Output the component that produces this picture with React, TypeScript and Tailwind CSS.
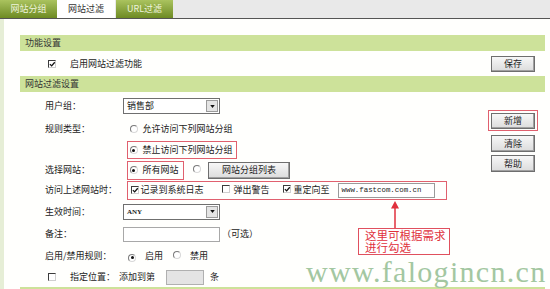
import React from "react";

const Check = ({ checked }: { checked?: boolean }) => (
  <span className="relative inline-block w-[8px] h-[8px] shrink-0 bg-white border-t border-l border-b border-r border-t-[#3c3c3c] border-l-[#3c3c3c] border-b-[#cfcfcf] border-r-[#cfcfcf]">
    {checked && (
      <svg viewBox="0 0 8 8" className="absolute left-0 top-0 w-[7px] h-[7px]">
        <path d="M1 3.6 L3 5.6 L6.6 1.4" stroke="#111" strokeWidth="1.5" fill="none" />
      </svg>
    )}
  </span>
);

const Radio = ({ checked }: { checked?: boolean }) => (
  <span className="inline-flex items-center justify-center w-[8px] h-[8px] shrink-0 rounded-full bg-white border border-t-[#7a7a7a] border-l-[#7a7a7a] border-b-[#d8d8d8] border-r-[#d8d8d8]">
    {checked && <span className="w-[3px] h-[3px] rounded-full bg-[#111]" />}
  </span>
);

const Btn = ({ children, className }: { children: React.ReactNode; className: string }) => (
  <div
    className={
      "flex items-center justify-center border border-[#6e6e6e] bg-gradient-to-b from-[#f7f7f7] to-[#dcdcdc] text-[#1e1e1e] shadow-[inset_-1px_-1px_0_#a0a0a0] " +
      className
    }
  >
    {children}
  </div>
);

const Select = ({ value, mono }: { value: string; mono?: boolean }) => (
  <div className="flex items-center w-[97px] h-[16px] border border-[#6f6f6f] bg-white">
    <span
      className={
        mono
          ? "flex-1 pl-[3px] font-['Liberation_Serif',serif] font-bold text-[7px] text-[#222]"
          : "flex-1 pl-[3px] text-[#222]"
      }
    >
      {value}
    </span>
    <span className="flex items-center justify-center w-[12px] h-[12px] mr-[1px] bg-[#e4e4e4] border border-[#9a9a9a]">
      <svg viewBox="0 0 6 4" className="w-[5px] h-[3px]">
        <path d="M0 0 L6 0 L3 4 Z" fill="#111" />
      </svg>
    </span>
  </div>
);

const Label = ({ children }: { children: React.ReactNode }) => (
  <span className="w-[78px] shrink-0 text-[#222]">{children}</span>
);

export default function App() {
  return (
    <div className="relative w-[550px] h-[289px] overflow-hidden bg-[#fffffd] text-[9px] leading-[12px] text-[#222] font-['Noto_Sans_CJK_SC','Noto_Sans',sans-serif]">
      {/* tab bar */}
      <div className="flex h-[19px] bg-[#e9e9e9] border-b border-[#555]">
        <div className="flex items-center justify-center w-[57px] h-[18px] bg-gradient-to-b from-[#aac35e] to-[#6e8b22] text-[#eef4dc]">
          网站分组
        </div>
        <div className="flex items-center justify-center w-[58px] h-[18px] bg-white text-[#333]">
          网站过滤
        </div>
        <div className="flex items-center justify-center w-[57px] h-[18px] ml-[1px] bg-gradient-to-b from-[#aac35e] to-[#6e8b22] text-[#eef4dc]">
          URL过滤
        </div>
      </div>

      <div className="flex">
        <div className="w-[4px] h-[270px] bg-[#e6eed6]" />
        <div className="flex-1 flex flex-col pl-[16px] pr-[5px] pt-[16px]">
          {/* 功能设置 */}
          <div className="flex items-center h-[16px] pl-[5px] bg-[#cde29a] text-[#333]">功能设置</div>
          <div className="flex items-center h-[25px] pl-[28px]">
            <Check checked />
            <span className="ml-[14px]">启用网站过滤功能</span>
            <Btn className="ml-auto mr-[10px] w-[44px] h-[16px]">保存</Btn>
          </div>
          {/* 网站过滤设置 */}
          <div className="flex items-center h-[16px] pl-[5px] bg-[#cde29a] text-[#333]">网站过滤设置</div>

          <div className="flex">
            <div className="flex-1 flex flex-col pt-[3px]">
              <div className="flex items-center h-[22px] pl-[25px]">
                <Label>用户组：</Label>
                <Select value="销售部" />
              </div>
              <div className="flex items-center h-[23px] pl-[25px]">
                <Label>规则类型：</Label>
                <div className="flex items-center gap-[5px] ml-[4px] pl-[1.5px] border-[1.5px] border-transparent">
                  <Radio />
                  <span>允许访问下列网站分组</span>
                </div>
              </div>
              <div className="flex items-center h-[20px] pl-[25px]">
                <Label>{""}</Label>
                <div className="flex items-center gap-[5px] ml-[4px] pl-[1.5px] w-[110px] h-[18px] border-[1.5px] border-[#e0606e]">
                  <Radio checked />
                  <span>禁止访问下列网站分组</span>
                </div>
              </div>
              <div className="flex items-center h-[20px] pl-[25px]">
                <Label>选择网站：</Label>
                <div className="flex items-center gap-[5px] ml-[4px] pl-[1.5px] w-[57px] h-[19px] border-[1.5px] border-[#e0606e]">
                  <Radio checked />
                  <span>所有网站</span>
                </div>
                <span className="ml-[9px]">
                  <Radio />
                </span>
                <Btn className="ml-[7px] w-[82px] h-[17px]">网站分组列表</Btn>
              </div>
              <div className="flex items-center h-[20px] pl-[25px]">
                <Label>访问上述网站时：</Label>
                <div className="flex items-center ml-[4px] pl-[2.5px] w-[320px] h-[19px] border-[1.5px] border-[#e0606e]">
                  <Check checked />
                  <span className="ml-[2px]">记录到系统日志</span>
                  <span className="ml-[18px]">
                    <Check />
                  </span>
                  <span className="ml-[4px]">弹出警告</span>
                  <span className="ml-[13px]">
                    <Check checked />
                  </span>
                  <span className="ml-[3px]">重定向至</span>
                  <div className="flex items-center ml-[8px] w-[97px] h-[15px] pl-[3px] bg-white border border-[#9a9a9a] font-['Liberation_Mono',monospace] text-[7.4px] text-[#222]">
                    www.fastcom.com.cn
                  </div>
                </div>
              </div>
              <div className="flex items-center h-[23px] pl-[25px]">
                <Label>生效时间：</Label>
                <Select value="ANY" mono />
              </div>
              <div className="flex items-center h-[22px] pl-[25px]">
                <Label>备注：</Label>
                <div className="w-[97px] h-[15px] bg-white border border-[#a8a8a8]" />
                <span className="ml-[2px]">（可选）</span>
              </div>
              <div className="flex items-center h-[22px] pl-[25px]">
                <Label>启用/禁用规则：</Label>
                <span className="ml-[5px]">
                  <Radio checked />
                </span>
                <span className="ml-[9px]">启用</span>
                <span className="ml-[10px]">
                  <Radio />
                </span>
                <span className="ml-[9px]">禁用</span>
              </div>
              <div className="flex items-center h-[20px] pl-[28px]">
                <Check />
                <span className="ml-[14px]">指定位置：</span>
                <span className="ml-[4px]">添加到第</span>
                <div className="ml-[11px] w-[38px] h-[15px] bg-[#e4e4e4] border border-[#b0b0b0]" />
                <span className="ml-[6px]">条</span>
              </div>
            </div>

            <div className="flex flex-col items-center w-[50px] mr-[7px] pt-[18px]">
              <div className="flex items-center justify-center w-[50px] h-[21px] border-[1.5px] border-[#e0606e]">
                <Btn className="w-[44px] h-[16px]">新增</Btn>
              </div>
              <Btn className="mt-[4px] w-[44px] h-[17px]">清除</Btn>
              <Btn className="mt-[3px] w-[44px] h-[17px]">帮助</Btn>
            </div>
          </div>

          <div className="h-[16px] bg-[#cde29a]" />
        </div>
      </div>

      {/* annotation arrow */}
      <svg className="absolute left-[390px] top-[201px] w-[10px] h-[28px]" viewBox="0 0 10 28">
        <path d="M5 0 L1 7.5 L9 7.5 Z" fill="#e0303c" />
        <line x1="5" y1="7" x2="5" y2="28" stroke="#e0303c" strokeWidth="1.5" />
      </svg>
      {/* annotation note */}
      <div className="absolute left-[358px] top-[228px] w-[92px] h-[27px] pl-[6px] bg-white border-[1.5px] border-[#e0505e] text-[11.5px] leading-[12px] text-[#e0303c]">
        <div>这里可根据需求</div>
        <div>进行勾选</div>
      </div>
      {/* watermark */}
      <div className="absolute left-[306px] top-[257px] font-['Liberation_Serif',serif] text-[30px] leading-[30px] tracking-[1.3px] text-[#a3c7a1] whitespace-nowrap">
        www.falogincn.cn
      </div>
    </div>
  );
}
